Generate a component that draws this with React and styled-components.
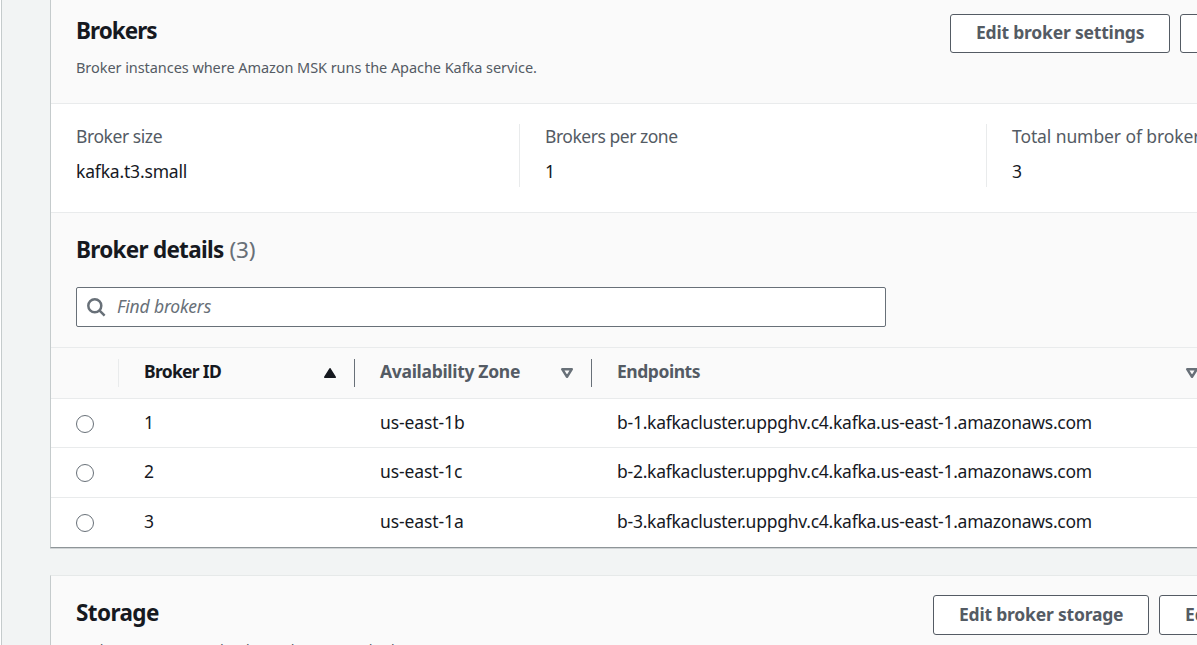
import React from "react";
import styled, { createGlobalStyle } from "styled-components";

const GlobalStyle = createGlobalStyle`
  * { box-sizing: border-box; }
  html, body { margin: 0; height: 645px; overflow: hidden; background: #f2f4f4; }
  body { font-family: "Noto Sans", "Open Sans", sans-serif; font-size: 17.5px; color: #16191f; }
`;

const Page = styled.div`
  display: flex;
  width: 1197px;
  height: 645px;
  overflow: hidden;
`;

const NavEdge = styled.div`
  flex: none;
  width: 2px;
  background: #fff;
  border-right: 1px solid #c5cbcc;
`;

const Main = styled.main`
  flex: none;
  width: 1250px;
  margin-left: 48px;
  display: flex;
  flex-direction: column;
  gap: 27px;
`;

const Card = styled.section`
  flex: none;
  background: #fff;
  border-left: 1px solid #c5cbcc;
  border-top: ${(p) => (p.$cut ? "none" : "1px solid #e6e9e9")};
  border-bottom: 1px solid #8e9598;
  box-shadow: 0 1px 0 #d0d4d6;
`;

const CardHeader = styled.header`
  display: flex;
  justify-content: space-between;
  height: 104px;
  padding: ${(p) => p.$top}px 25px 0 25px;
  background: #fafafa;
  border-bottom: 1px solid #e9ebec;
`;

const Titles = styled.div`
  display: flex;
  flex-direction: column;
  padding-top: 2px;
  white-space: nowrap;
`;

const Text = styled.span`
  letter-spacing: ${(p) => p.$track || 0}px;
  white-space: nowrap;
`;

const Title = styled.h2`
  margin: 0;
  font-size: 22.5px;
  line-height: 30px;
  font-weight: 700;
  letter-spacing: ${(p) => p.$track}px;
  white-space: nowrap;
`;

const Counter = styled.span`
  margin-left: 6px;
  font-weight: 400;
  letter-spacing: -0.2px;
  color: #687078;
`;

const Description = styled.p`
  margin: 11px 0 0;
  font-size: 14.5px;
  line-height: 20px;
  letter-spacing: ${(p) => p.$track}px;
  color: #545b64;
`;

const Actions = styled.div`
  display: flex;
  gap: 10px;
`;

const Button = styled.button`
  width: ${(p) => p.$width}px;
  height: ${(p) => p.$height}px;
  padding: 0 0 3px 25px;
  overflow: hidden;
  text-align: left;
  background: #fff;
  border: 1px solid #545b64;
  border-radius: 3px;
  color: #545b64;
  font: 700 17.5px "Noto Sans", sans-serif;
  letter-spacing: ${(p) => p.$track}px;
  white-space: nowrap;
`;

const Summary = styled.div`
  display: grid;
  grid-template-columns: 468px 467px 1fr;
  height: 109px;
  padding: 20px 0 25px;
  border-bottom: 1px solid #e9ebec;
`;

const Fact = styled.div`
  display: flex;
  flex-direction: column;
  gap: 11px;
  height: 63px;
  padding: 0 0 0 25px;
  border-left: ${(p) => (p.$first ? "none" : "1px solid #e9ebec")};
  line-height: 24px;
`;

const FactLabel = styled(Text)`
  color: #545b64;
`;

const Toolbar = styled.div`
  height: 135px;
  padding: 22px 25px 0;
  background: #fafafa;
  border-bottom: 1px solid #e9ebec;
`;

const Search = styled.div`
  display: flex;
  align-items: center;
  width: 810px;
  height: 40px;
  margin-top: 22px;
  padding-left: 10px;
  gap: 11px;
  background: #fff;
  border: 1px solid #687078;
  border-radius: 2px;
  color: #687078;
  font-style: italic;
`;

const Placeholder = styled(Text)`
  padding-bottom: 2px;
`;

const Row = styled.div`
  display: grid;
  grid-template-columns: 68px 236px 237px 1fr;
  align-items: center;
  height: ${(p) => p.$height}px;
  border-bottom: ${(p) => (p.$last ? "none" : "1px solid #e9ebec")};
`;

const HeadRow = styled(Row)`
  background: #fafafa;
`;

const HeadCell = styled.div`
  display: flex;
  align-items: center;
  height: 28px;
  width: ${(p) => (p.$width ? `${p.$width}px` : "auto")};
  padding: 0 17px 4px 25px;
  justify-content: space-between;
  border-right: 1px solid ${(p) => p.$line || "transparent"};
  color: ${(p) => (p.$active ? "#16191f" : "#545b64")};
  font-weight: 700;
`;

const Cell = styled.div`
  padding-left: 25px;
  padding-bottom: 3px;
  line-height: 24px;
`;

const Radio = styled.span`
  display: block;
  width: 18px;
  height: 18px;
  margin: 1px 0 0 25px;
  background: #fff;
  border: 1px solid #687078;
  border-radius: 50%;
`;

const SearchIcon = () => (
  <svg width="19" height="19" viewBox="0 0 19 19" fill="none" stroke="#687078" strokeWidth="2.5">
    <circle cx="7.8" cy="7.8" r="6.5" />
    <path d="M12.4 12.4 L17.6 17.6" />
  </svg>
);

const SortIcon = styled.svg`
  flex: none;
  width: 14px;
  height: 12px;
  margin-top: 4px;
`;

const SortUp = () => (
  <SortIcon viewBox="0 0 14 12">
    <path d="M7 1.8 L12.2 10.2 H1.8 Z" fill="#16191f" stroke="#16191f" strokeWidth="1.6" strokeLinejoin="round" />
  </SortIcon>
);

const SortDown = () => (
  <SortIcon viewBox="0 0 14 12">
    <path d="M2.2 2.2 H11.8 L7 9.8 Z" fill="none" stroke="#687078" strokeWidth="2.5" strokeLinejoin="round" />
  </SortIcon>
);

const brokers = [
  { id: "1", zone: "us-east-1b", height: 49 },
  { id: "2", zone: "us-east-1c", height: 50 },
  { id: "3", zone: "us-east-1a", height: 49 },
];

export default function App() {
  return (
    <Page>
      <GlobalStyle />
      <NavEdge />
      <Main>
        <Card $cut>
          <CardHeader $top={14}>
            <Titles>
              <Title $track={-0.95}>Brokers</Title>
              <Description $track={-0.06}>Broker instances where Amazon MSK runs the Apache Kafka service.</Description>
            </Titles>
            <Actions>
              <Button $width={220} $height={39} $track={-0.2}>Edit broker settings</Button>
              <Button $width={95} $height={39} />
            </Actions>
          </CardHeader>
          <Summary>
            <Fact $first>
              <FactLabel $track={-0.43}>Broker size</FactLabel>
              <Text $track={-0.18}>kafka.t3.small</Text>
            </Fact>
            <Fact>
              <FactLabel $track={-0.47}>Brokers per zone</FactLabel>
              <Text>1</Text>
            </Fact>
            <Fact>
              <FactLabel $track={-0.1}>Total number of brokers</FactLabel>
              <Text>3</Text>
            </Fact>
          </Summary>
          <Toolbar>
            <Title $track={-0.72}>
              Broker details<Counter>(3)</Counter>
            </Title>
            <Search>
              <SearchIcon />
              <Placeholder $track={-0.15}>Find brokers</Placeholder>
            </Search>
          </Toolbar>
          <HeadRow $height={51}>
            <HeadCell $line="#e9ebec" />
            <HeadCell $line="#687078" $active>
              <Text $track={-0.7}>Broker ID</Text>
              <SortUp />
            </HeadCell>
            <HeadCell $line="#687078">
              <Text $track={-0.31}>Availability Zone</Text>
              <SortDown />
            </HeadCell>
            <HeadCell $width={625}>
              <Text $track={-0.47}>Endpoints</Text>
              <SortDown />
            </HeadCell>
          </HeadRow>
          {brokers.map((b, i) => (
            <Row key={b.id} $height={b.height} $last={i === 2}>
              <Radio />
              <Cell>{b.id}</Cell>
              <Cell><Text $track={-0.1}>{b.zone}</Text></Cell>
              <Cell><Text $track={-0.25}>{`b-${b.id}.kafkacluster.uppghv.c4.kafka.us-east-1.amazonaws.com`}</Text></Cell>
            </Row>
          ))}
        </Card>
        <Card>
          <CardHeader $top={20}>
            <Titles>
              <Title $track={-0.6}>Storage</Title>
              <Description $track={-0.06}>Broker storage uses the data volumes attached</Description>
            </Titles>
            <Actions style={{ marginTop: -1 }}>
              <Button $width={216} $height={40} $track={-0.2}>Edit broker storage</Button>
              <Button $width={116} $height={40}>Edit</Button>
            </Actions>
          </CardHeader>
        </Card>
      </Main>
    </Page>
  );
}
